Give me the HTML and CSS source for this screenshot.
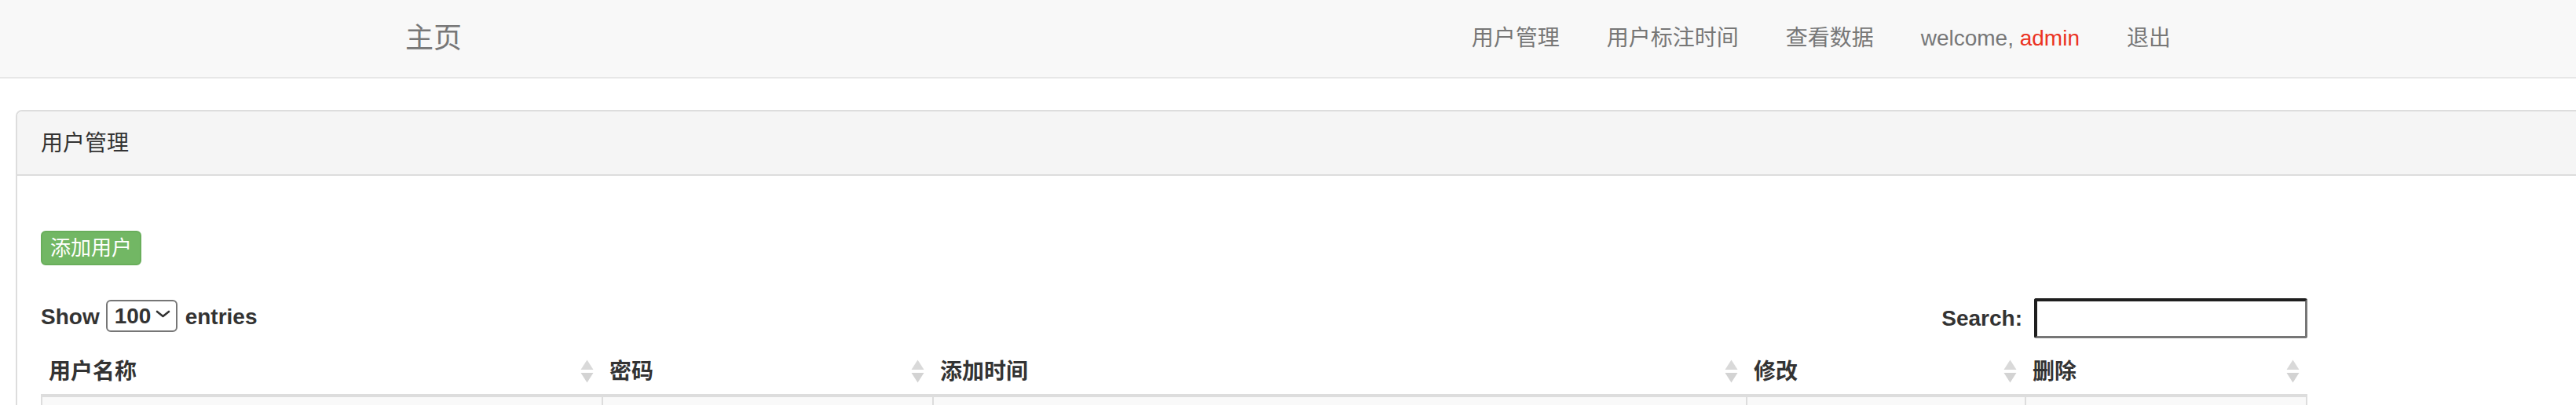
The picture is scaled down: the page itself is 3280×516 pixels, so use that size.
FILE: index.html
```html
<!DOCTYPE html>
<html lang="zh-CN">
<head>
<meta charset="utf-8">
<title>用户管理</title>
<link rel="stylesheet" href="styles.css">
</head>
<body>
<nav class="navbar">
  <div class="nav-inner">
    <a class="brand" href="#">主页</a>
    <ul class="nav-links">
      <li><a href="#">用户管理</a></li>
      <li><a href="#">用户标注时间</a></li>
      <li><a href="#">查看数据</a></li>
      <li><span class="welcome">welcome, <span class="user">admin</span></span></li>
      <li><a href="#">退出</a></li>
    </ul>
  </div>
</nav>
<main class="page">
  <section class="panel">
    <div class="panel-heading">用户管理</div>
    <div class="panel-body">
      <button class="btn-add" type="button">添加用户</button>
      <div class="dt-wrapper">
        <div class="dt-top">
          <label class="dt-length"><span>Show</span><span class="select-wrap"><select class="dt-select"><option>10</option><option>25</option><option>50</option><option selected>100</option></select><svg class="chev" width="19" height="10" viewBox="0 0 19 10"><polyline points="2,2 9.5,8 17,2" fill="none" stroke="#333" stroke-width="2.6" stroke-linecap="round" stroke-linejoin="round"/></svg></span><span>entries</span></label>
          <label class="dt-filter">Search:<input class="dt-search" type="search"></label>
        </div>
        <table class="dt-table">
          <colgroup>
            <col class="c1"><col class="c2"><col class="c3"><col class="c4"><col class="c5">
          </colgroup>
          <thead>
            <tr>
              <th>用户名称<svg class="sort-icon" width="17" height="30" viewBox="0 0 17 30"><path d="M8.5 0.5 L16.5 13 L0.5 13 Z" fill="#d9d9d9"/><path d="M0.5 17 L16.5 17 L8.5 29.5 Z" fill="#d3d3d3"/></svg></th>
              <th>密码<svg class="sort-icon" width="17" height="30" viewBox="0 0 17 30"><path d="M8.5 0.5 L16.5 13 L0.5 13 Z" fill="#d9d9d9"/><path d="M0.5 17 L16.5 17 L8.5 29.5 Z" fill="#d3d3d3"/></svg></th>
              <th>添加时间<svg class="sort-icon" width="17" height="30" viewBox="0 0 17 30"><path d="M8.5 0.5 L16.5 13 L0.5 13 Z" fill="#d9d9d9"/><path d="M0.5 17 L16.5 17 L8.5 29.5 Z" fill="#d3d3d3"/></svg></th>
              <th>修改<svg class="sort-icon" width="17" height="30" viewBox="0 0 17 30"><path d="M8.5 0.5 L16.5 13 L0.5 13 Z" fill="#d9d9d9"/><path d="M0.5 17 L16.5 17 L8.5 29.5 Z" fill="#d3d3d3"/></svg></th>
              <th>删除<svg class="sort-icon" width="17" height="30" viewBox="0 0 17 30"><path d="M8.5 0.5 L16.5 13 L0.5 13 Z" fill="#d9d9d9"/><path d="M0.5 17 L16.5 17 L8.5 29.5 Z" fill="#d3d3d3"/></svg></th>
            </tr>
          </thead>
          <tbody>
            <tr class="odd"><td></td><td></td><td></td><td></td><td></td></tr>
            <tr class="even"><td></td><td></td><td></td><td></td><td></td></tr>
          </tbody>
        </table>
      </div>
    </div>
  </section>
</main>
</body>
</html>
```

FILE: styles.css
```css
html, body {
  margin: 0;
  padding: 0;
}

body {
  font-family: "Liberation Sans", "Noto Sans CJK SC", sans-serif;
  font-size: 28px;
  line-height: 40px;
  color: #333;
  background: #fff;
  overflow-x: hidden;
}

/* navbar */
.navbar {
  height: 98px;
  background: #f8f8f8;
  border-bottom: 2px solid #e7e7e7;
}

.nav-inner {
  width: 2308px;
  height: 100%;
  margin: 0 auto;
  display: flex;
  align-items: center;
  justify-content: space-between;
}

.brand {
  padding: 0 30px;
  font-size: 36px;
  line-height: 40px;
  color: #777;
  text-decoration: none;
}

.nav-links {
  display: flex;
  list-style: none;
  margin: 0;
  padding: 0;
}

.nav-links li {
  padding: 0 30px;
  color: #777;
}

.nav-links a {
  color: #777;
  text-decoration: none;
}

.user {
  color: #eb3323;
}

/* page + panel */
.page {
  padding: 40px 0 0 20px;
}

.panel {
  width: 3300px;
  border: 2px solid #ddd;
  border-radius: 8px;
  background: #fff;
}

.panel-heading {
  padding: 21px 30px 19px;
  background: #f5f5f5;
  border-bottom: 2px solid #ddd;
  border-radius: 6px 6px 0 0;
  color: #333;
}

.panel-body {
  padding: 30px;
}

.btn-add {
  display: block;
  margin: 40px 0 0;
  padding: 0 10px;
  font-family: inherit;
  font-size: 26px;
  line-height: 40px;
  color: #fff;
  background: #72b764;
  border: 2px solid #69ae5b;
  border-radius: 6px;
}

/* datatable */
.dt-wrapper {
  width: 2886px;
}

.dt-top {
  display: flex;
  justify-content: space-between;
  align-items: flex-start;
  margin-top: 42px;
}

.dt-length {
  display: flex;
  align-items: center;
  height: 41px;
  margin-top: 1px;
  padding-top: 2px;
  font-weight: bold;
}

.select-wrap {
  position: relative;
  display: inline-block;
  margin: -2px 10px 0 8px;
}

.dt-select {
  -webkit-appearance: none;
  appearance: none;
  display: block;
  box-sizing: border-box;
  width: 91px;
  height: 41px;
  padding: 0 30px 0 9px;
  font-family: inherit;
  font-size: 28px;
  font-weight: bold;
  color: #333;
  background: #fff;
  border: 2px solid #767676;
  border-radius: 6px;
}

.chev {
  position: absolute;
  left: 63px;
  top: 13px;
  pointer-events: none;
}

.dt-filter {
  display: flex;
  align-items: center;
  font-weight: bold;
}

.dt-search {
  box-sizing: border-box;
  width: 348px;
  height: 51px;
  margin-left: 15px;
  padding: 0 6px;
  font: inherit;
  background: #fff;
  border-style: solid;
  border-width: 4px 3px 3px 4px;
  border-color: #1e1e1e #767676 #767676 #1e1e1e;
  border-radius: 3px;
}

.dt-table {
  width: 2886px;
  table-layout: fixed;
  border-collapse: separate;
  border-spacing: 0;
  margin-top: 5px;
}

.c1 { width: 714px; }
.c2 { width: 421px; }
.c3 { width: 1036px; }
.c4 { width: 355px; }
.c5 { width: 360px; }

.dt-table th {
  position: relative;
  padding: 18px 30px 8px 10px;
  text-align: left;
  font-weight: bold;
  line-height: 40px;
  color: #333;
  border-bottom: 4px solid #ddd;
}

.sort-icon {
  position: absolute;
  right: 10px;
  top: 22px;
}

.dt-table td {
  height: 80px;
  padding: 16px;
  background: #f9f9f9;
  border-left: 2px solid #ddd;
  border-bottom: 2px solid #ddd;
}

.dt-table tr.even td {
  background: #fff;
}

.dt-table td:last-child {
  border-right: 2px solid #ddd;
}
```
